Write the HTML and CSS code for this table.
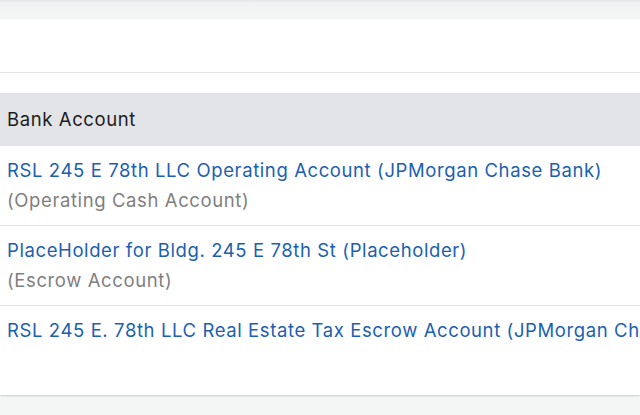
FILE: index.html
```html
<!DOCTYPE html>
<html>
<head>
<meta charset="utf-8">
<link rel="stylesheet" href="styles.css">
</head>
<body>
<div class="page">
  <div class="card">
    <div class="toolbar"></div>
    <div class="spacer"></div>
    <div class="table">
      <div class="thead">Bank Account</div>
      <div class="row">
        <a class="link">RSL 245 E 78th LLC Operating Account (JPMorgan Chase Bank)</a>
        <div class="sub">(Operating Cash Account)</div>
      </div>
      <div class="row">
        <a class="link">PlaceHolder for Bldg. 245 E 78th St (Placeholder)</a>
        <div class="sub">(Escrow Account)</div>
      </div>
      <div class="row last">
        <a class="link">RSL 245 E. 78th LLC Real Estate Tax Escrow Account (JPMorgan Chase Bank)</a>
      </div>
    </div>
  </div>
</div>
</body>
</html>
```

FILE: styles.css
```css
html, body {
  margin: 0;
  padding: 0;
  background: #f3f4f4;
  font-family: Inter, "Noto Sans", sans-serif;
  font-size: 18.5px;
  letter-spacing: 0.6px;
  overflow: hidden;
}
.page {
  width: 640px;
  height: 415px;
  padding-top: 19px;
  box-sizing: border-box;
  background: linear-gradient(#e4e5e7 0, #f1f2f3 3px, #f4f5f5 19px);
}
.card {
  background: #fff;
  height: 376px;
  box-shadow: 0 1px 2px rgba(0,0,0,0.18);
  overflow: hidden;
}
.toolbar {
  height: 53px;
  border-bottom: 1px solid #e3e3e3;
}
.spacer {
  height: 20px;
  border-bottom: 1px solid #e3e3e3;
}
.thead {
  background: #e3e4e7;
  color: #1c1c1e;
  line-height: 30px;
  padding: 10px 7px 11px;
  border-bottom: 1px solid #e0e0e0;
  white-space: nowrap;
}
.row {
  padding: 9px 7px 10px;
  line-height: 30px;
  border-bottom: 1px solid #e5e5e5;
  white-space: nowrap;
}
.row.last {
  border-bottom: none;
}
.link {
  display: block;
  color: #1b5fb1;
  text-decoration: none;
}
.sub {
  color: #808080;
}
```
